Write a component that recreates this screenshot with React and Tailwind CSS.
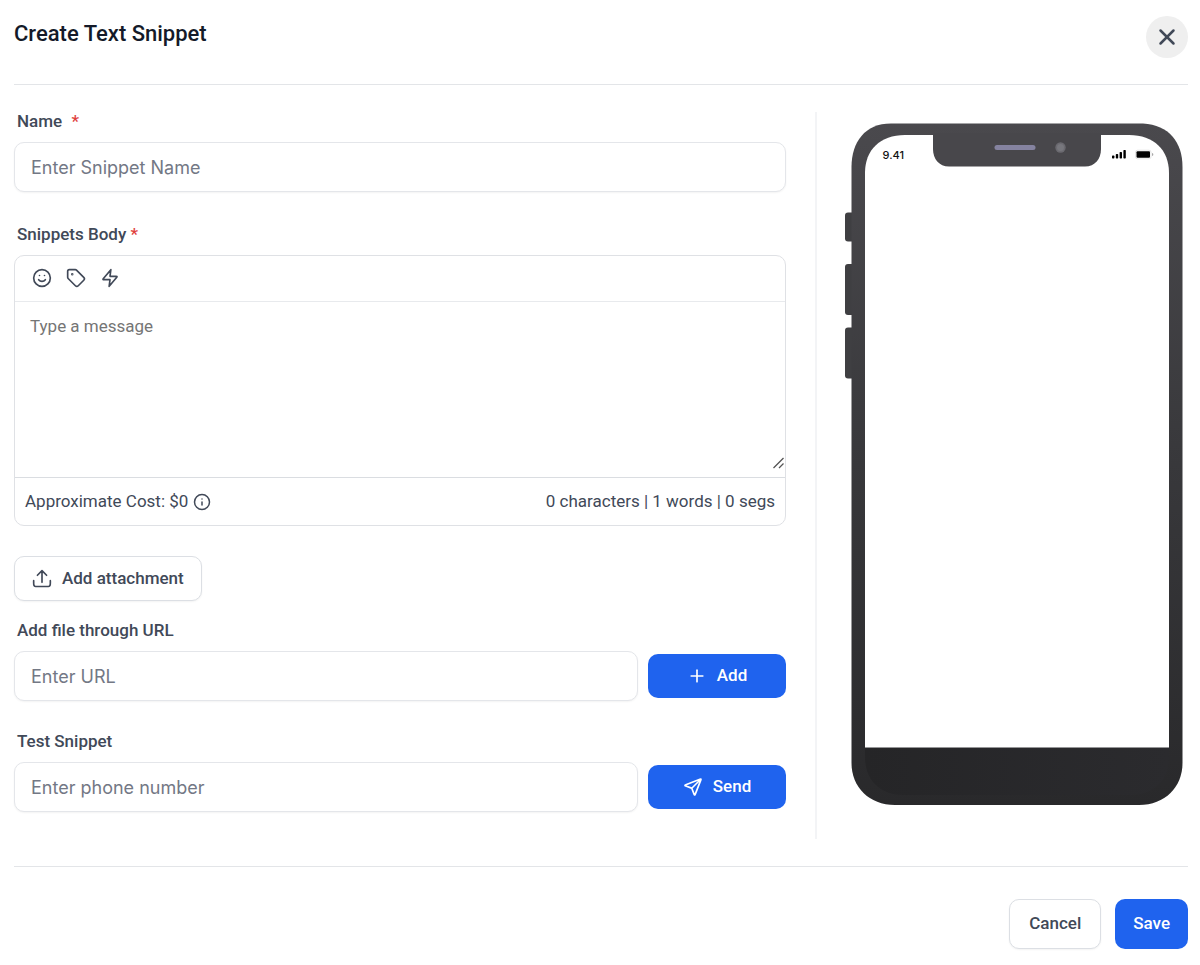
import React, { useState } from "react";
import { Info, Plus, Smile, Tag, X } from "lucide-react";

const inputClass =
  "h-[50px] w-full min-w-0 rounded-[10px] border border-[#e4e6ea] bg-white px-4 font-['Inter',sans-serif] text-[18px] text-gray-700 shadow-xs outline-none placeholder:text-[#737885] focus:border-blue-500";
const labelClass = "ml-[3px] block text-[17px] leading-[18px] font-medium text-[#414958]";
const primaryClass =
  "flex items-center justify-center rounded-[10px] bg-[#1f63ee] text-[17px] font-medium text-white hover:bg-blue-700";
const outlineClass =
  "flex items-center justify-center rounded-[10px] border border-[#dcdfe4] bg-white text-[17px] font-medium text-[#414958] shadow-xs hover:bg-gray-50";

const StrokeIcon = ({ d, className }) => (
  <svg className={className} viewBox="0 0 24 24" fill="none" stroke="currentColor" strokeWidth={2} strokeLinecap="round" strokeLinejoin="round" aria-hidden="true">
    <path d={d} />
  </svg>
);

const ZAP =
  "M13 2L4.1 12.69c-.35.42-.53.63-.53.8 0 .16.06.3.18.4.14.11.41.11.96.11H12l-1 8 8.9-10.69c.35-.42.53-.63.53-.8 0-.16-.06-.3-.18-.4-.14-.11-.41-.11-.96-.11H12l1-8z";
const UPLOAD =
  "M2 14v2.5c0 1.6 0 2.4.3 3 .3.5.7.9 1.2 1.2.6.3 1.4.3 3 .3h11c1.6 0 2.4 0 3-.3.5-.3.9-.7 1.2-1.2.3-.6.3-1.4.3-3V14M17.500 7.500L12 2 6.500 7.500M12 2v14";
const SEND =
  "M10.5 13.5L21 3M10.627 13.828l2.628 6.758c.232.596.348.893.514.98.145.075.317.076.462 0 .167-.086.283-.384.515-.979l6.59-16.888c.21-.537.315-.806.258-.977a.5.5 0 00-.316-.316c-.172-.057-.44.047-.978.257L3.413 9.253c-.595.233-.893.349-.98.516a.5.5 0 000 .461c.087.167.385.283.98.514l6.759 2.628c.12.048.18.071.232.107a.5.5 0 01.116.117c.037.05.06.111.107.232z";

const PhonePreview = () => (
  <svg className="block h-auto w-full" viewBox="0 0 338 682" role="img" aria-label="Phone preview">
    <defs>
      <linearGradient id="shell" x1="0" y1="0" x2="0" y2="1">
        <stop offset="0" stopColor="#4a494d" />
        <stop offset="0.5" stopColor="#38383b" />
        <stop offset="1" stopColor="#29292b" />
      </linearGradient>
      <linearGradient id="chin" x1="0" y1="0" x2="1" y2="0">
        <stop offset="0" stopColor="#252527" />
        <stop offset="1" stopColor="#2b2b2e" />
      </linearGradient>
    </defs>
    {/* Side buttons */}
    <g fill="#3f3f42">
      <rect x="0" y="89.500" width="12" height="29" rx="3" />
      <rect x="0" y="141" width="12" height="51" rx="3" />
      <rect x="0" y="204.500" width="12" height="51" rx="3" />
    </g>
    {/* Body and screen */}
    <path d="M46 0.500H298C324 2 337.500 19 337.500 44V640C337.500 664 320 682 294 682H50C24 682 6.500 664 6.500 640V44C6.500 19 20 0.500 46 0.500z" fill="url(#shell)" />
    <path d="M20 625H324V634C324 658 308 672 286 672H58C36 672 20 658 20 634z" fill="url(#chin)" />
    <path d="M60 12H284C309 12 324 27 324 50V624.500H20V50C20 27 35 12 60 12z" fill="#fff" />
    {/* Notch */}
    <path d="M88 10H256V26C256 36 250 43.500 240 43.500H104C94 43.500 88 36 88 26z" fill="#48474b" />
    <rect x="149.500" y="22" width="41" height="5" rx="2.500" fill="#8583a0" />
    <circle cx="215.500" cy="24.500" r="5.200" fill="#6b6a70" />
    <circle cx="215.500" cy="24.500" r="3.500" fill="#77777d" />
    {/* Status bar */}
    <text x="37.500" y="36" fontFamily="Inter, sans-serif" fontSize="11" fontWeight="500" fill="#111">9.41</text>
    <g fill="#000">
      <rect x="267" y="32.500" width="2.400" height="3" rx="0.700" />
      <rect x="270.800" y="31" width="2.400" height="4.500" rx="0.700" />
      <rect x="274.600" y="29" width="2.400" height="6.500" rx="0.700" />
      <rect x="278.400" y="27" width="2.400" height="8.500" rx="0.700" />
      <rect x="291.500" y="28.200" width="13.500" height="6.600" rx="1" />
    </g>
    <rect x="290.500" y="27.200" width="15.500" height="8.600" rx="2" fill="none" stroke="#ccc" strokeWidth="0.500" />
    <path d="M307 30v3c.9-.3 1.300-.8 1.300-1.500S307.900 30.300 307 30z" fill="#aaa" />
  </svg>
);

const App = () => {
  const [name, setName] = useState("");
  const [body, setBody] = useState("");
  const [url, setUrl] = useState("");
  const [phone, setPhone] = useState("");

  return (
    <div className="min-h-screen bg-white pr-3 pl-[14px] font-['Roboto',sans-serif] text-[#414958]">
      {/* Header */}
      <header className="flex items-start justify-between border-b border-[#e3e5e8] pt-4 pb-[26px]">
        <h1 className="pt-1 text-[22px] leading-7 font-medium text-[#141a29]">Create Text Snippet</h1>
        <button aria-label="Close" className="flex size-[42px] items-center justify-center rounded-full bg-[#efefef] text-[#414958]">
          <X className="size-[26px]" strokeWidth={2.3} />
        </button>
      </header>

      <main className="flex border-b border-[#e3e5e8] py-[27px]">
        <form className="min-w-0 flex-1 pr-[29px] pb-[27px]" onSubmit={(e) => e.preventDefault()}>
          <label htmlFor="name" className={labelClass}>
            Name <span className="ml-[5px] text-[#e0403c]">*</span>
          </label>
          <input id="name" className={`mt-3 ${inputClass}`} placeholder="Enter Snippet Name" value={name} onChange={(e) => setName(e.target.value)} />

          <label htmlFor="body" className={`mt-[33px] ${labelClass}`}>
            Snippets Body <span className="text-[#e0403c]">*</span>
          </label>
          <div className="mt-3 rounded-[10px] border border-[#dfe1e5]">
            <div className="flex h-[45px] items-center gap-[14px] px-[17px] pb-[2px]">
              <button type="button" aria-label="Emoji">
                <Smile className="size-5" />
              </button>
              <button type="button" aria-label="Custom values">
                <Tag className="size-5" />
              </button>
              <button type="button" aria-label="Trigger links">
                <StrokeIcon d={ZAP} className="size-5" />
              </button>
            </div>
            <div className="border-t border-b border-t-[#e8eaed] border-b-[#dadde1] pb-[7px]">
              <div className="relative">
                <textarea
                  id="body"
                  className="block h-[168px] w-full resize-y px-[15px] py-3 text-[17px] leading-6 outline-none placeholder:text-[#757575]"
                  placeholder="Type a message"
                  value={body}
                  onChange={(e) => setBody(e.target.value)}
                />
                {/* Resize grip */}
                <svg className="pointer-events-none absolute right-0 bottom-0 size-[14px] bg-white" viewBox="0 0 14 14" stroke="#555" strokeWidth="1.3" aria-hidden="true">
                  <path d="M2.500 12L12.500 2M8 12L12.500 7.500" />
                </svg>
              </div>
            </div>
            <div className="flex h-[47px] items-center justify-between px-[10px] text-[17px]">
              <span className="flex items-center gap-[5px]">
                Approximate Cost: $0 <Info className="size-[18px]" />
              </span>
              <span>{body.length} characters | 1 words | 0 segs</span>
            </div>
          </div>

          <button type="button" className={`mt-[30px] h-[45px] gap-[10px] px-[17px] ${outlineClass}`}>
            <StrokeIcon d={UPLOAD} className="size-5" />
            Add attachment
          </button>

          <label htmlFor="url" className={`mt-5 ${labelClass}`}>
            Add file through URL
          </label>
          <div className="mt-3 flex items-center gap-[10px]">
            <input id="url" className={inputClass} placeholder="Enter URL" value={url} onChange={(e) => setUrl(e.target.value)} />
            <button type="button" className={`h-11 w-[138px] shrink-0 gap-[10px] ${primaryClass}`}>
              <Plus className="size-5" />
              Add
            </button>
          </div>

          <label htmlFor="phone" className={`mt-[31px] ${labelClass}`}>
            Test Snippet
          </label>
          <div className="mt-3 flex items-center gap-[10px]">
            <input id="phone" type="tel" className={inputClass} placeholder="Enter phone number" value={phone} onChange={(e) => setPhone(e.target.value)} />
            <button type="button" className={`h-11 w-[138px] shrink-0 gap-[10px] ${primaryClass}`}>
              <StrokeIcon d={SEND} className="size-5" />
              Send
            </button>
          </div>
        </form>

        <aside className="w-[373px] shrink-0 border-l-2 border-[#f3f4f6] pt-[11px] pr-[5px] pl-7">
          <PhonePreview />
        </aside>
      </main>

      {/* Footer */}
      <footer className="flex justify-end gap-[14px] pt-8 pb-4">
        <button className={`h-[50px] px-[19px] ${outlineClass}`}>Cancel</button>
        <button className={`h-[50px] px-[18px] ${primaryClass}`}>Save</button>
      </footer>
    </div>
  );
};

export default App;
